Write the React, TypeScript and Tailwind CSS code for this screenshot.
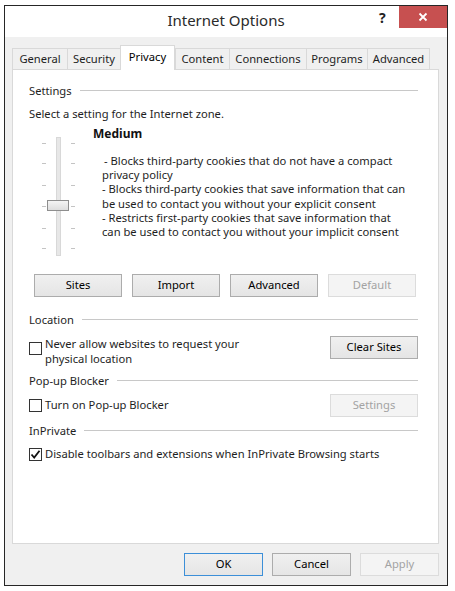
import React from "react";

const F = { fontFamily: '"Noto Sans", "Open Sans", sans-serif' };

function Btn({ label, w = "w-[88px]", disabled = false, def = false }: { label: string; w?: string; disabled?: boolean; def?: boolean }) {
  const base = "h-[23px] flex items-center justify-center text-[11.2px] border " + w + " ";
  if (disabled) return <div className={base + "border-[#dcdcdc] bg-[#f4f4f4] text-[#a3a3a3]"}>{label}</div>;
  if (def) return <div className={base + "border-[#3c8fd8] bg-gradient-to-b from-[#f0f0f0] to-[#e5e5e5] text-black"}>{label}</div>;
  return <div className={base + "border-[#acacac] bg-gradient-to-b from-[#f0f0f0] to-[#e5e5e5] text-black"}>{label}</div>;
}

function Section({ label }: { label: string }) {
  return (
    <div className="flex items-center h-[15px]">
      <span className="text-[11.2px] text-[#1e1e1e] leading-[15px]">{label}</span>
      <div className="flex-1 ml-[8px] h-px bg-[#c8c8c8]" />
    </div>
  );
}

function Check({ checked = false }: { checked?: boolean }) {
  return (
    <div className="w-[13px] h-[13px] border border-[#333] bg-white flex items-center justify-center shrink-0">
      {checked && (
        <svg width="11" height="11" viewBox="0 0 11 11">
          <path d="M1.5 5.5 L4.2 8.5 L9.5 1.8" fill="none" stroke="#111" strokeWidth="1.8" />
        </svg>
      )}
    </div>
  );
}

function Tab({ label, w, active = false }: { label: string; w: string; active?: boolean }) {
  if (active)
    return (
      <div className={"h-[25px] -mb-px relative z-10 bg-white border border-[#d9d9d9] border-b-0 flex items-start justify-center pt-[3px] text-[11.2px] text-black " + w}>
        {label}
      </div>
    );
  return (
    <div className={"h-[21px] bg-[#f0f0f0] border border-[#d9d9d9] border-b-0 flex items-center justify-center text-[11.2px] text-[#1e1e1e] -mr-px " + w}>
      {label}
    </div>
  );
}

export default function App() {
  const ticks = [6, 26, 48, 69, 91, 111];
  return (
    <div className="w-[455px] h-[591px] bg-white" style={F}>
      <div className="ml-[4px] pt-[5px]">
        <div className="w-[444px] h-[581px] border border-[#262626] bg-[#f0f0f0] flex flex-col">
          {/* title bar */}
          <div className="h-[31px] bg-white relative flex items-center justify-center">
            <span className="text-[15px] text-[#2a2a2a] mt-[-2px]">Internet Options</span>
            <span className="absolute left-[374px] top-[1px] text-[14px] font-bold text-[#222]">?</span>
            <div className="absolute right-0 top-0 w-[48px] h-[22px] bg-[#c75050] flex items-center justify-center">
              <svg width="10" height="10" viewBox="0 0 10 10">
                <path d="M1.5 1.5 L8.5 8.5 M8.5 1.5 L1.5 8.5" stroke="#fff" strokeWidth="1.8" />
              </svg>
            </div>
          </div>
          {/* tabs */}
          <div className="pl-[7px] pr-[8px] pt-[8px]">
            <div className="flex items-end h-[24px]">
              <Tab label="General" w="w-[56px]" />
              <Tab label="Security" w="w-[54px]" />
              <Tab label="Privacy" w="w-[55px]" active />
              <Tab label="Content" w="w-[55px]" />
              <Tab label="Connections" w="w-[78px]" />
              <Tab label="Programs" w="w-[62px]" />
              <Tab label="Advanced" w="w-[63px]" />
            </div>
            {/* panel */}
            <div className="h-[475px] bg-white border border-[#d9d9d9] pl-[16px] pr-[20px] pt-[13px] text-[11.2px] text-[#1e1e1e]">
              <Section label="Settings" />
              <div className="mt-[8px] leading-[15px]">Select a setting for the Internet zone.</div>
              <div className="flex mt-[4px]">
                <div className="relative w-[38px] h-[119px] ml-[11px] mt-[12px]">
                  <div className="absolute left-[16px] top-0 w-[5px] h-[119px] bg-[#e7e7e7] border border-[#d8d8d8]" />
                  {ticks.map((t) => (
                    <React.Fragment key={t}>
                      <div className="absolute left-[2px] w-[4px] h-px bg-[#c4c4c4]" style={{ top: t }} />
                      <div className="absolute left-[31px] w-[4px] h-px bg-[#c4c4c4]" style={{ top: t }} />
                    </React.Fragment>
                  ))}
                  <div className="absolute left-[7px] top-[63px] w-[22px] h-[11px] border border-[#8e8e8e] bg-gradient-to-b from-[#f4f4f4] to-[#dedede]" />
                </div>
                <div className="ml-[15px]">
                  <div className="font-bold text-[12px] leading-[15px] text-[#111] mt-[1px]">Medium</div>
                  <div className="mt-[13px] ml-[9px] leading-[14.2px] whitespace-nowrap">
                    <div className="pl-[2px]">- Blocks third-party cookies that do not have a compact</div>
                    <div>privacy policy</div>
                    <div>- Blocks third-party cookies that save information that can</div>
                    <div>be used to contact you without your explicit consent</div>
                    <div>- Restricts first-party cookies that save information that</div>
                    <div>can be used to contact you without your implicit consent</div>
                  </div>
                </div>
              </div>
              <div className="flex mt-[18px] ml-[5px] gap-[10px]">
                <Btn label="Sites" />
                <Btn label="Import" />
                <Btn label="Advanced" />
                <Btn label="Default" disabled />
              </div>
              <div className="mt-[15px]">
                <Section label="Location" />
              </div>
              <div className="flex items-start justify-between mt-[9px]">
                <div className="flex items-start mt-[5px]">
                  <div className="mt-[1px]"><Check /></div>
                  <div className="ml-[3px] leading-[14.5px] -mt-[4px]">
                    <div>Never allow websites to request your</div>
                    <div>physical location</div>
                  </div>
                </div>
                <Btn label="Clear Sites" />
              </div>
              <div className="mt-[7px]">
                <Section label="Pop-up Blocker" />
              </div>
              <div className="flex items-center justify-between mt-[6px]">
                <div className="flex items-center">
                  <Check />
                  <span className="ml-[3px]">Turn on Pop-up Blocker</span>
                </div>
                <Btn label="Settings" disabled />
              </div>
              <div className="mt-[6px]">
                <Section label="InPrivate" />
              </div>
              <div className="flex items-center mt-[8px]">
                <Check checked />
                <span className="ml-[3px]">Disable toolbars and extensions when InPrivate Browsing starts</span>
              </div>
            </div>
          </div>
          {/* footer */}
          <div className="flex justify-end gap-[9px] pr-[8px] mt-[9px]">
            <Btn label="OK" w="w-[79px]" def />
            <Btn label="Cancel" w="w-[79px]" />
            <Btn label="Apply" w="w-[79px]" disabled />
          </div>
        </div>
      </div>
    </div>
  );
}
